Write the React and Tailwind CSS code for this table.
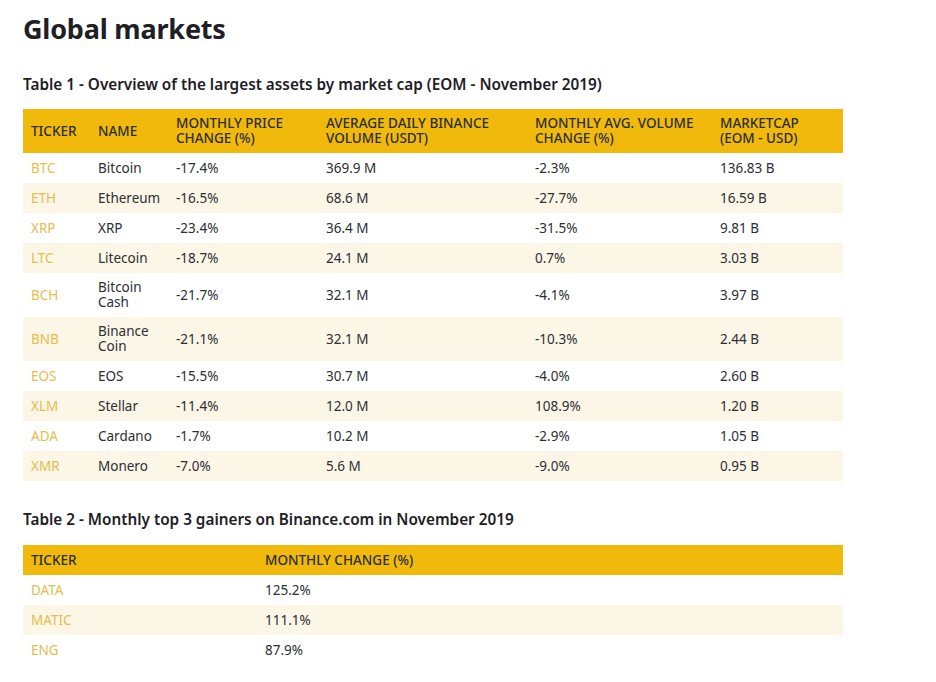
const rows = [
  ['BTC', 'Bitcoin', '-17.4%', '369.9 M', '-2.3%', '136.83 B'],
  ['ETH', 'Ethereum', '-16.5%', '68.6 M', '-27.7%', '16.59 B'],
  ['XRP', 'XRP', '-23.4%', '36.4 M', '-31.5%', '9.81 B'],
  ['LTC', 'Litecoin', '-18.7%', '24.1 M', '0.7%', '3.03 B'],
  ['BCH', 'Bitcoin Cash', '-21.7%', '32.1 M', '-4.1%', '3.97 B'],
  ['BNB', 'Binance Coin', '-21.1%', '32.1 M', '-10.3%', '2.44 B'],
  ['EOS', 'EOS', '-15.5%', '30.7 M', '-4.0%', '2.60 B'],
  ['XLM', 'Stellar', '-11.4%', '12.0 M', '108.9%', '1.20 B'],
  ['ADA', 'Cardano', '-1.7%', '10.2 M', '-2.9%', '1.05 B'],
  ['XMR', 'Monero', '-7.0%', '5.6 M', '-9.0%', '0.95 B'],
];

const gainers = [
  ['DATA', '125.2%'],
  ['MATIC', '111.1%'],
  ['ENG', '87.9%'],
];

const font = { fontFamily: '"Noto Sans", "Open Sans", sans-serif' };

export default function App() {
  return (
    <div className="bg-white w-[936px] h-[682px] overflow-hidden pl-[23px] pt-[12px] text-[#1e2026]" style={font}>
      <h1 className="text-[27px] leading-[34px] font-bold tracking-[-0.2px]">Global markets</h1>

      <h2 className="mt-[27px] text-[15.3px] leading-[22px] font-semibold">
        Table 1 - Overview of the largest assets by market cap (EOM - November 2019)
      </h2>

      <table className="mt-[14px] w-[820px] table-fixed border-collapse text-[13.5px]">
        <colgroup>
          <col className="w-[67px]" />
          <col className="w-[78px]" />
          <col className="w-[150px]" />
          <col className="w-[209px]" />
          <col className="w-[185px]" />
          <col className="w-[131px]" />
        </colgroup>
        <thead>
          <tr className="bg-[#f0b90b] h-[44px] text-[#2b2f36] leading-[15px] text-left uppercase">
            <th className="font-medium pl-2">Ticker</th>
            <th className="font-medium pl-2">Name</th>
            <th className="font-medium pl-2">Monthly price<br />change (%)</th>
            <th className="font-medium pl-2">Average daily Binance<br />volume (USDT)</th>
            <th className="font-medium pl-2">Monthly avg. volume<br />change (%)</th>
            <th className="font-medium pl-2">Marketcap<br />(EOM - USD)</th>
          </tr>
        </thead>
        <tbody>
          {rows.map((r, i) => {
            const tall = r[1].includes(' ');
            return (
              <tr key={r[0]} className={`${i % 2 ? 'bg-[#fcf6e6]' : 'bg-white'} ${tall ? 'h-[44px]' : 'h-[30px]'}`}>
                <td className="pl-2 text-[#e5bd4e]">{r[0]}</td>
                <td className="pl-2 leading-[15px] text-[#2b2f36]">
                  {tall ? (
                    <>
                      {r[1].split(' ')[0]}
                      <br />
                      {r[1].split(' ')[1]}
                    </>
                  ) : (
                    r[1]
                  )}
                </td>
                <td className="pl-2 text-[#2b2f36]">{r[2]}</td>
                <td className="pl-2 text-[#2b2f36]">{r[3]}</td>
                <td className="pl-2 text-[#2b2f36]">{r[4]}</td>
                <td className="pl-2 text-[#2b2f36]">{r[5]}</td>
              </tr>
            );
          })}
        </tbody>
      </table>

      <h2 className="mt-[27px] text-[15.3px] leading-[22px] font-semibold">
        Table 2 - Monthly top 3 gainers on Binance.com in November 2019
      </h2>

      <table className="mt-[15px] w-[820px] table-fixed border-collapse text-[13.5px]">
        <colgroup>
          <col className="w-[234px]" />
          <col />
        </colgroup>
        <thead>
          <tr className="bg-[#f0b90b] h-[30px] text-[#2b2f36] text-left uppercase">
            <th className="font-medium pl-2">Ticker</th>
            <th className="font-medium pl-2">Monthly change (%)</th>
          </tr>
        </thead>
        <tbody>
          {gainers.map((g, i) => (
            <tr key={g[0]} className={`${i % 2 ? 'bg-[#fcf6e6]' : 'bg-white'} h-[30px]`}>
              <td className="pl-2 text-[#e5bd4e]">{g[0]}</td>
              <td className="pl-2 text-[#2b2f36]">{g[1]}</td>
            </tr>
          ))}
        </tbody>
      </table>
    </div>
  );
}
